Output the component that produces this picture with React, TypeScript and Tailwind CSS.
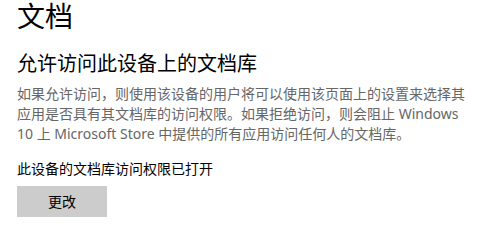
export default function App() {
  return (
    <div
      className="h-[220px] w-[482px] overflow-hidden bg-white pl-[17px] text-black"
      style={{ fontFamily: '"Noto Sans", "Noto Sans CJK SC", sans-serif' }}
    >
      {/* Page title */}
      <h1 className="text-[28px] leading-[32px] font-normal">文档</h1>

      {/* Section */}
      <h2 className="mt-[18px] text-[20px] leading-[28px] font-normal">允许访问此设备上的文档库</h2>
      <p className="mt-[6px] w-[460px] text-[14px] leading-[20px] text-[#666666]">
        如果允许访问，则使用该设备的用户将可以使用该页面上的设置来选择其应用是否具有其文档库的访问权限。如果拒绝访问，则会阻止 Windows 10 上 Microsoft Store 中提供的所有应用访问任何人的文档库。
      </p>

      <p className="mt-[15px] text-[14px] leading-[20px]">此设备的文档库访问权限已打开</p>

      <button
        type="button"
        className="mt-[7px] flex h-[31px] w-[90px] items-center justify-center bg-[#cccccc] text-[14px] text-black"
      >
        更改
      </button>
    </div>
  )
}
